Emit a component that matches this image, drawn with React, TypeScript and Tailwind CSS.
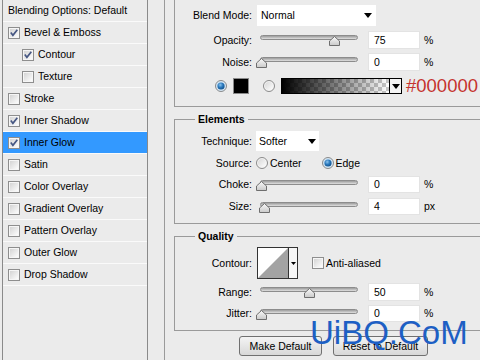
import clsx from "clsx";

function CheckBox({ checked }: { checked?: boolean }) {
  return (
    <svg width="12" height="12" viewBox="0 0 12 12" className="shrink-0">
      <defs>
        <linearGradient id="cbFill" x1="0" y1="0" x2="1" y2="1">
          <stop offset="0" stopColor="#d4d4d4" />
          <stop offset="1" stopColor="#fcfcfc" />
        </linearGradient>
      </defs>
      <rect x="0.5" y="0.5" width="11" height="11" fill="#f6f6f6" stroke="#8e8e8e" />
      <rect x="2" y="2" width="8" height="8" fill="url(#cbFill)" />
      {checked && (
        <path d="M2.8 5.6 L4.9 8.3 L9.3 2.8" fill="none" stroke="#465783" strokeWidth="1.7" />
      )}
    </svg>
  );
}

function Radio({ checked }: { checked?: boolean }) {
  return (
    <svg width="12" height="12" viewBox="0 0 12 12" className="shrink-0">
      <defs>
        <linearGradient id="rdFill" x1="0" y1="0" x2="1" y2="1">
          <stop offset="0" stopColor="#d8d8d8" />
          <stop offset="1" stopColor="#fdfdfd" />
        </linearGradient>
        <radialGradient id="rdDot" cx="0.4" cy="0.35" r="0.7">
          <stop offset="0" stopColor="#8cc4ee" />
          <stop offset="0.5" stopColor="#2a79bd" />
          <stop offset="1" stopColor="#0f4d86" />
        </radialGradient>
      </defs>
      <circle cx="6" cy="6" r="5.5" fill={checked ? "#d3e6f5" : "#f4f4f4"} stroke="#8a8a8a" />
      {checked ? (
        <circle cx="6" cy="6" r="3.6" fill="url(#rdDot)" />
      ) : (
        <circle cx="6" cy="6" r="4" fill="url(#rdFill)" />
      )}
    </svg>
  );
}

function Arrow() {
  return (
    <svg width="8" height="5" viewBox="0 0 8 5" className="shrink-0">
      <path d="M0 0 H8 L4 5 Z" fill="#000" />
    </svg>
  );
}

function Slider({ pos }: { pos: number }) {
  return (
    <div className="relative ml-[8px] mt-[1px] h-[11px] w-[98px] shrink-0">
      <div className="h-[5px] rounded-full border border-[#8c8c8c] bg-linear-to-b from-[#9c9c9c] to-[#e0e0e0]" />
      <svg className="absolute top-[1px]" style={{ left: pos - 5 }} width="11" height="10" viewBox="0 0 11 10">
        <defs>
          <linearGradient id="thumbFill" x1="0" y1="0" x2="0" y2="1">
            <stop offset="0" stopColor="#fafafa" />
            <stop offset="1" stopColor="#c9c9c9" />
          </linearGradient>
        </defs>
        <path d="M5.5 0.5 L10.5 5 L10.5 9.5 L0.5 9.5 L0.5 5 Z" fill="url(#thumbFill)" stroke="#6e6e6e" />
      </svg>
    </div>
  );
}

function NumBox({ value }: { value: string }) {
  return (
    <div className="ml-[10px] flex h-full w-[52px] shrink-0 items-center border border-[#e3e3e3] bg-white pl-[5px]">
      {value}
    </div>
  );
}

function Field({
  label,
  className,
  children,
}: {
  label: string;
  className?: string;
  children: React.ReactNode;
}) {
  return (
    <div className={clsx("flex items-center", className)}>
      <div className="w-[77px] shrink-0 text-right">{label}</div>
      {children}
    </div>
  );
}

function SliderField({
  label,
  pos,
  value,
  unit,
  className,
}: {
  label: string;
  pos: number;
  value: string;
  unit: string;
  className?: string;
}) {
  return (
    <Field label={label} className={className}>
      <Slider pos={pos} />
      <NumBox value={value} />
      <span className="ml-[4px]">{unit}</span>
    </Field>
  );
}

const styles = [
  { name: "Bevel & Emboss", checked: true },
  { name: "Contour", checked: true, indent: true },
  { name: "Texture", indent: true },
  { name: "Stroke" },
  { name: "Inner Shadow", checked: true },
  { name: "Inner Glow", checked: true, active: true },
  { name: "Satin" },
  { name: "Color Overlay" },
  { name: "Gradient Overlay" },
  { name: "Pattern Overlay" },
  { name: "Outer Glow" },
  { name: "Drop Shadow" },
];

export default function App() {
  return (
    <div className="relative flex h-[360px] w-[480px] overflow-hidden bg-[#ebebeb] font-['Liberation_Sans',Arial,sans-serif] text-[10.5px] leading-none text-black">
      {/* style list */}
      <div className="ml-[2px] h-full w-[146px] shrink-0 border-x border-[#8a8a8a]">
        <div className="flex h-[22px] items-center border-b border-[#fafafa] pl-[5px]">
          Blending Options: Default
        </div>
        {styles.map((s) => (
          <div
            key={s.name}
            className={clsx(
              "flex h-[22px] items-center gap-[4px] border-b border-[#fafafa]",
              s.indent ? "pl-[19px]" : "pl-[5px]",
              s.active && "bg-[#3399ff]"
            )}
          >
            <CheckBox checked={s.checked} />
            <span>{s.name}</span>
          </div>
        ))}
      </div>

      {/* settings */}
      <div className="ml-[16px] w-[340px] shrink-0 border-l border-[#9a9a9a] pl-[9px]">
        <div className="h-[107px] border-b border-l border-[#9a9a9a] pt-[5px]">
          <Field label="Blend Mode:" className="h-[21px]">
            <div className="ml-[5px] flex h-full w-[119px] items-center justify-between bg-white pl-[4px] pr-[4px]">
              <span>Normal</span>
              <Arrow />
            </div>
          </Field>
          <SliderField label="Opacity:" pos={74} value="75" unit="%" className="mt-[5px] h-[18px]" />
          <SliderField label="Noise:" pos={1} value="0" unit="%" className="mt-[4px] h-[18px]" />
          <div className="mt-[7px] flex h-[16px] items-center pl-[40px]">
            <Radio checked />
            <div className="ml-[6px] h-[16px] w-[16px] border border-[#8a8a8a] bg-black" />
            <div className="ml-[14px]">
              <Radio />
            </div>
            <div className="ml-[6px] flex h-[16px] w-[121px] border border-black">
              <svg width="107" height="14" viewBox="0 0 107 14" className="shrink-0">
                <defs>
                  <pattern id="checker" width="8" height="8" patternUnits="userSpaceOnUse">
                    <rect width="8" height="8" fill="#ffffff" />
                    <rect width="4" height="4" fill="#c8c8c8" />
                    <rect x="4" y="4" width="4" height="4" fill="#c8c8c8" />
                  </pattern>
                  <linearGradient id="fade" x1="0" y1="0" x2="1" y2="0">
                    <stop offset="0" stopColor="#000" />
                    <stop offset="1" stopColor="#000" stopOpacity="0" />
                  </linearGradient>
                </defs>
                <rect width="107" height="14" fill="url(#checker)" />
                <rect width="107" height="14" fill="url(#fade)" />
              </svg>
              <div className="flex flex-1 items-center justify-center border-l border-black bg-[#f4f4f4]">
                <Arrow />
              </div>
            </div>
            <span className="ml-[4px] text-[18.5px] text-[#c5332e]">#000000</span>
          </div>
        </div>

        <fieldset className="mt-[6px] border border-[#9a9a9a] pb-[8px]">
          <legend className="ml-[20px] px-[3px] font-bold leading-[13px]">Elements</legend>
          <Field label="Technique:" className="mt-[5px] h-[20px]">
            <div className="ml-[4px] flex h-full w-[63px] items-center justify-between bg-white pl-[3px] pr-[3px]">
              <span>Softer</span>
              <Arrow />
            </div>
          </Field>
          <Field label="Source:" className="mt-[5px] h-[14px]">
            <div className="ml-[4px] flex items-center">
              <Radio />
              <span className="ml-[2px]">Center</span>
              <div className="ml-[20px]">
                <Radio checked />
              </div>
              <span className="ml-[2px]">Edge</span>
            </div>
          </Field>
          <SliderField label="Choke:" pos={1} value="0" unit="%" className="mt-[6px] h-[17px]" />
          <SliderField label="Size:" pos={4} value="4" unit="px" className="mt-[5px] h-[17px]" />
        </fieldset>

        <fieldset className="mt-[6px] border border-[#9a9a9a] pb-[8px]">
          <legend className="ml-[20px] px-[3px] font-bold leading-[13px]">Quality</legend>
          <Field label="Contour:" className="mt-[4px] h-[32px]">
            <div className="ml-[5px] flex h-full w-[41px] border border-[#333]">
              <svg width="30" height="30" viewBox="0 0 30 30" className="shrink-0">
                <rect width="30" height="30" fill="#fff" />
                <path d="M0 30 L30 0 L30 30 Z" fill="#a3a3a3" />
              </svg>
              <div className="flex flex-1 items-center justify-center border-l border-[#333] bg-[#f6f6f6]">
                <svg width="5" height="3" viewBox="0 0 5 3">
                  <path d="M0 0 H5 L2.5 3 Z" fill="#000" />
                </svg>
              </div>
            </div>
            <div className="ml-[14px]">
              <CheckBox />
            </div>
            <span className="ml-[2px]">Anti-aliased</span>
          </Field>
          <SliderField label="Range:" pos={49} value="50" unit="%" className="mt-[4px] h-[18px]" />
          <SliderField label="Jitter:" pos={1} value="0" unit="%" className="mt-[4px] h-[17px]" />
        </fieldset>

        <div className="mt-[5px] flex pl-[65px]">
          <button className="h-[20px] w-[83px] rounded-[3px] border border-[#707070] bg-linear-to-b from-[#f4f4f4] to-[#d8d8d8]">
            Make Default
          </button>
          <button className="ml-[11px] h-[20px] w-[95px] rounded-[3px] border border-[#707070] bg-linear-to-b from-[#f4f4f4] to-[#d8d8d8]">
            Reset to Default
          </button>
        </div>
      </div>

      <div className="pointer-events-none absolute left-[310px] top-[316px] text-[33px] leading-none text-[#1d5fc4]">
        UiBQ.CoM
      </div>
    </div>
  );
}
